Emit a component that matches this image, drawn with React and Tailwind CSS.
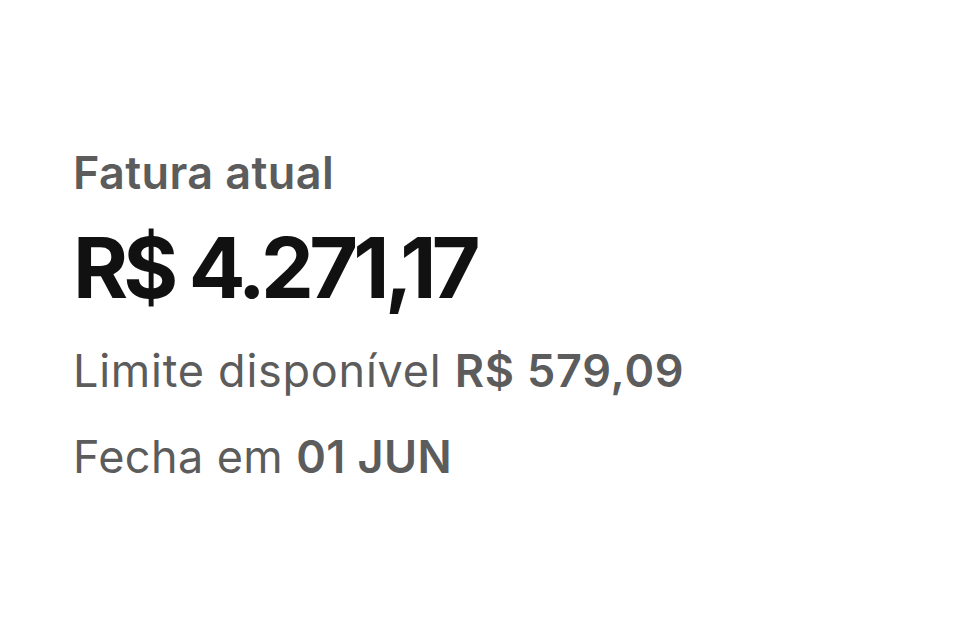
export default function App() {
  return (
    <main className="min-h-screen w-full bg-white font-['Inter','Roboto',sans-serif]">
      <section className="pl-[73px] pt-[146px]">
        <p className="text-[45px] leading-[54px] font-semibold tracking-[0.4px] text-[#5c5c5c]">Fatura atual</p>
        <p className="mt-[18px] text-[84px] leading-[100px] font-bold tracking-[-4.8px] text-[#111111]">
          R$ 4.271,17
        </p>
        <p className="mt-[26px] text-[45px] leading-[54px] tracking-[0.75px] text-[#5c5c5c]">
          Limite disponível <span className="font-semibold">R$ 579,09</span>
        </p>
        <p className="mt-[32px] text-[45px] leading-[54px] tracking-[0.4px] text-[#5c5c5c]">
          Fecha em <span className="font-semibold">01 JUN</span>
        </p>
      </section>
    </main>
  );
}
